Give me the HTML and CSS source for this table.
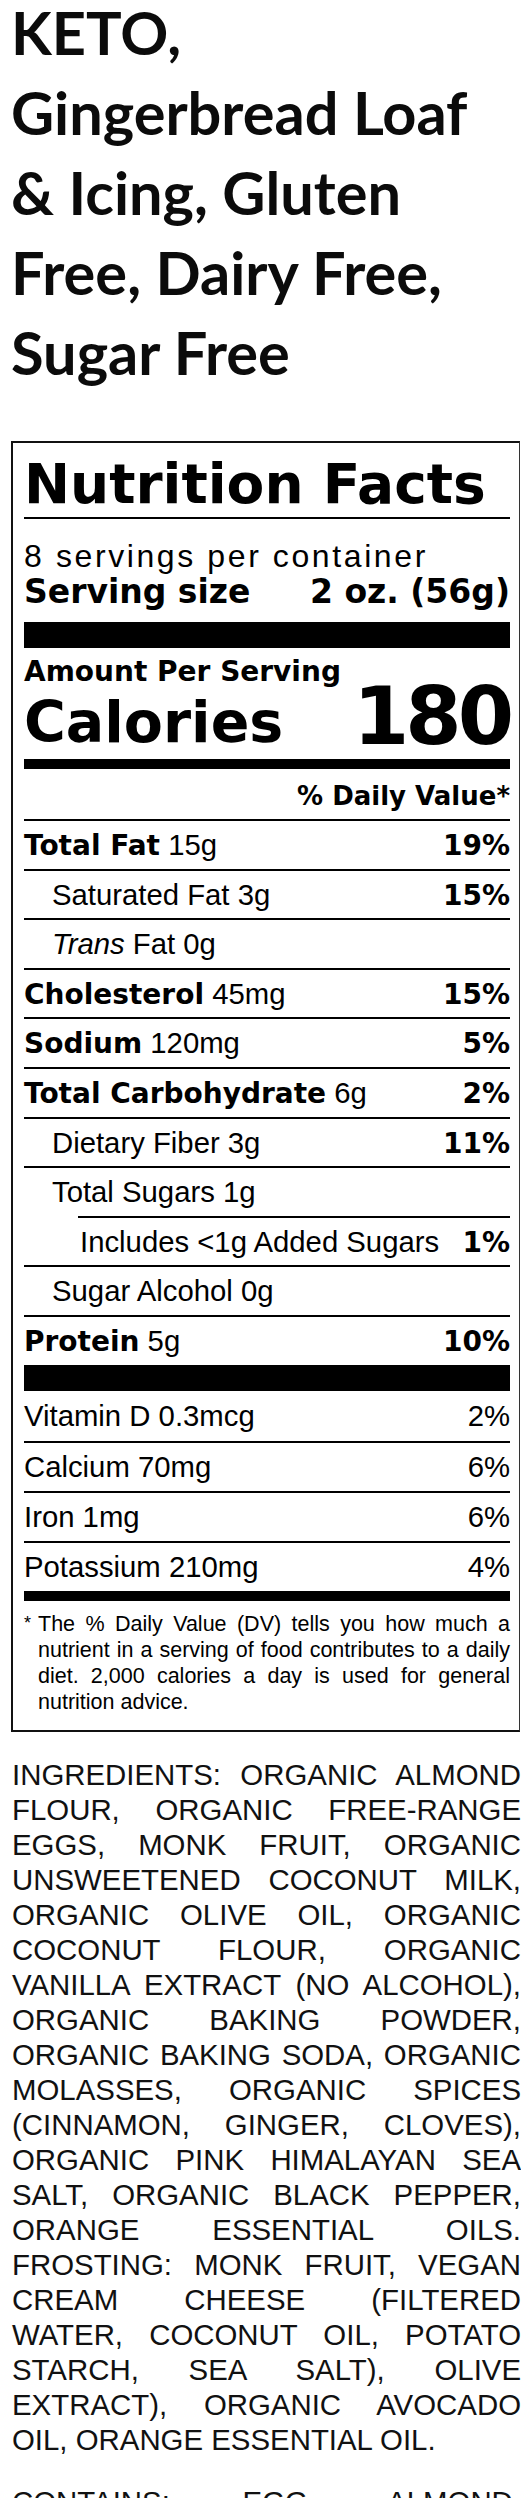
FILE: index.html
```html
<!DOCTYPE html>
<html lang="en">
<head>
<meta charset="utf-8">
<title>KETO Gingerbread Loaf &amp; Icing</title>
<link rel="stylesheet" href="styles.css">
</head>
<body>
<div class="page">
  <h1 class="title">KETO, Gingerbread Loaf &amp; Icing, Gluten Free, Dairy Free, Sugar Free</h1>

  <section class="label">
    <h2 class="nf-title">Nutrition Facts</h2>
    <div class="servings">8 servings per container</div>
    <div class="serving-size"><span>Serving size</span><span>2 oz. (56g)</span></div>
    <div class="bar-thick"></div>
    <div class="cal-block">
      <div class="cal-left">
        <div class="amount">Amount Per Serving</div>
        <div class="calories">Calories</div>
      </div>
      <div class="cal-num">180</div>
    </div>
    <div class="bar-med"></div>
    <div class="dv-head">% Daily Value*</div>

    <div class="row"><span><b class="b">Total Fat</b> 15g</span><b class="b">19%</b></div>
    <div class="row indent"><span>Saturated Fat 3g</span><b class="b">15%</b></div>
    <div class="row indent"><span><i>Trans</i> Fat 0g</span></div>
    <div class="row"><span><b class="b">Cholesterol</b> 45mg</span><b class="b">15%</b></div>
    <div class="row"><span><b class="b">Sodium</b> 120mg</span><b class="b">5%</b></div>
    <div class="row"><span><b class="b">Total Carbohydrate</b> 6g</span><b class="b">2%</b></div>
    <div class="row indent"><span>Dietary Fiber 3g</span><b class="b">11%</b></div>
    <div class="row indent"><span>Total Sugars 1g</span></div>
    <div class="row sub"><span>Includes &lt;1g Added Sugars</span><b class="b">1%</b></div>
    <div class="row indent"><span>Sugar Alcohol 0g</span></div>
    <div class="row"><span><b class="b">Protein</b> 5g</span><b class="b">10%</b></div>
    <div class="bar-thick bar-protein"></div>

    <div class="row vit first"><span>Vitamin D 0.3mcg</span><span>2%</span></div>
    <div class="row vit"><span>Calcium 70mg</span><span>6%</span></div>
    <div class="row vit"><span>Iron 1mg</span><span>6%</span></div>
    <div class="row vit"><span>Potassium 210mg</span><span>4%</span></div>
    <div class="bar-med bar-end"></div>

    <p class="footnote"><span class="star">*</span>The % Daily Value (DV) tells you how much a nutrient in a serving of food contributes to a daily diet. 2,000 calories a day is used for general nutrition advice.</p>
  </section>

  <p class="ingredients">INGREDIENTS: ORGANIC ALMOND FLOUR, ORGANIC FREE-RANGE EGGS, MONK FRUIT, ORGANIC UNSWEETENED COCONUT MILK, ORGANIC OLIVE OIL, ORGANIC COCONUT FLOUR, ORGANIC VANILLA EXTRACT (NO ALCOHOL), ORGANIC BAKING POWDER, ORGANIC BAKING SODA, ORGANIC MOLASSES, ORGANIC SPICES (CINNAMON, GINGER, CLOVES), ORGANIC PINK HIMALAYAN SEA SALT, ORGANIC BLACK PEPPER, ORANGE ESSENTIAL OILS. FROSTING: MONK FRUIT, VEGAN CREAM CHEESE (FILTERED WATER, COCONUT OIL, POTATO STARCH, SEA SALT), OLIVE EXTRACT), ORGANIC AVOCADO OIL, ORANGE ESSENTIAL OIL.</p>
  <p class="ingredients contains">CONTAINS: EGG, ALMOND, COCONUT.</p>
</div>
</body>
</html>
```

FILE: styles.css
```css
* { box-sizing: border-box; }

html, body {
  margin: 0;
  padding: 0;
  background: #fff;
  color: #000;
}

.page {
  width: 521px;
  height: 2498px;
  overflow: hidden;
}

.title {
  font: 700 59.5px/80px "Lato", "Liberation Sans", sans-serif;
  color: #0b0b0b;
  margin: -8px 0 0;
  padding: 0 15px 0 11px;
}

.label {
  margin: 49px 0 0 11px;
  width: 509px;
  border: 2px solid #111;
  border-right: 1px solid #333;
  padding: 11px 9px 15px 11px;
  font-family: "Liberation Sans", Arial, sans-serif;
  color: #000;
}

.nf-title {
  font: 700 55px/60px "DejaVu Sans", sans-serif;
  margin: 0;
  padding-bottom: 3px;
  border-bottom: 2px solid #000;
}

.servings {
  margin-top: 20px;
  font: 400 32px/34px "Liberation Sans", Arial, sans-serif;
  letter-spacing: 2.6px;
}

.serving-size {
  margin-top: 2px;
  display: flex;
  justify-content: space-between;
  font: 700 33px/34px "DejaVu Sans", sans-serif;
}

.bar-thick {
  margin-top: 13px;
  height: 26px;
  background: #000;
}

.bar-protein { margin-top: 0; }

.cal-block {
  margin-top: 9px;
  display: flex;
  justify-content: space-between;
  align-items: flex-end;
  font-family: "DejaVu Sans", sans-serif;
  font-weight: 700;
}

.amount {
  font-size: 28px;
  line-height: 30px;
}

.calories {
  margin-top: 6px;
  font-size: 57px;
  line-height: 58px;
}

.cal-num {
  font-size: 81px;
  line-height: 70px;
  letter-spacing: -4px;
}

.bar-med {
  margin-top: 8px;
  height: 10px;
  background: #000;
}

.bar-end { margin-top: 0; }

.dv-head {
  margin: 13px 0 9px;
  text-align: right;
  font: 700 26px/28px "DejaVu Sans", sans-serif;
}

.row {
  display: flex;
  justify-content: space-between;
  align-items: baseline;
  height: 49.6px;
  border-top: 2px solid #000;
  font-size: 29.3px;
  line-height: 47.6px;
  white-space: nowrap;
}

.row.indent { padding-left: 28px; }

.row.sub {
  margin-left: 54px;
  padding-left: 2px;
}

.row.vit {
  height: 50px;
  line-height: 48px;
}

.row.vit.first {
  border-top: 0;
  line-height: 50px;
}

.b {
  font-family: "DejaVu Sans", sans-serif;
  font-weight: 700;
  font-size: 28px;
}

.footnote {
  margin: 10px 0 0;
  padding-left: 14px;
  text-indent: -14px;
  font-size: 21.5px;
  line-height: 26px;
  text-align: justify;
}

.star {
  display: inline-block;
  width: 14px;
  text-indent: 0;
  font-size: 18px;
  vertical-align: top;
  line-height: 24px;
}

.ingredients {
  margin: 25px 0 0;
  width: 521px;
  padding-left: 12px;
  font: 400 29.4px/35px "Liberation Sans", Arial, sans-serif;
  color: #111;
  text-align: justify;
}

.contains { margin-top: 27px; }
```
